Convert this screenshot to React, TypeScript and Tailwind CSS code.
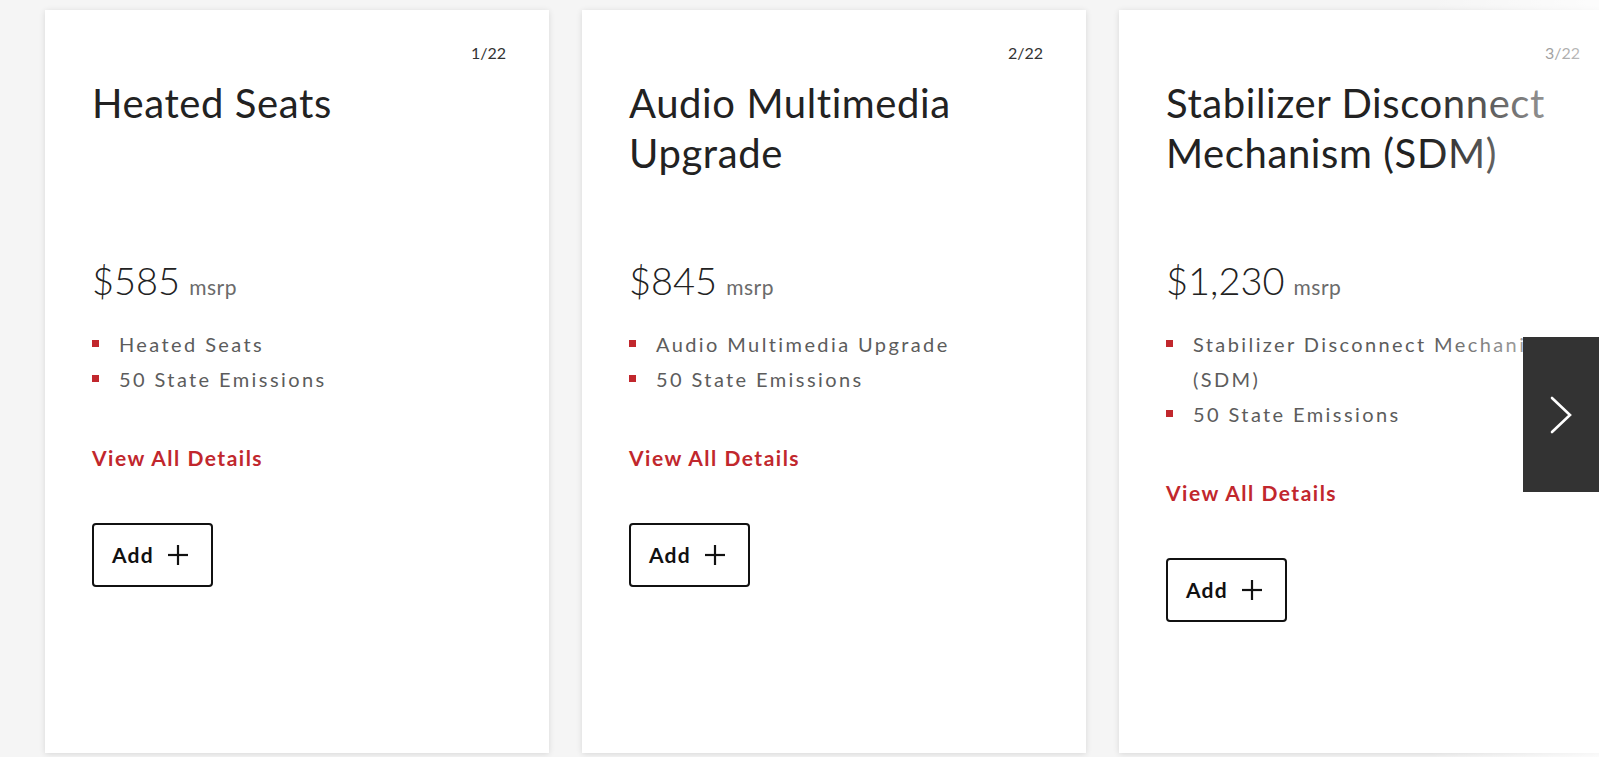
import React from "react";

type Card = {
  idx: string;
  title: string;
  price: string;
  bullets: string[];
};

const cards: Card[] = [
  { idx: "1/22", title: "Heated Seats", price: "$585", bullets: ["Heated Seats", "50 State Emissions"] },
  { idx: "2/22", title: "Audio Multimedia Upgrade", price: "$845", bullets: ["Audio Multimedia Upgrade", "50 State Emissions"] },
  {
    idx: "3/22",
    title: "Stabilizer Disconnect Mechanism (SDM)",
    price: "$1,230",
    bullets: ["Stabilizer Disconnect Mechanism (SDM)", "50 State Emissions"],
  },
];

function PlusIcon() {
  return (
    <svg width="22" height="22" viewBox="0 0 22 22" fill="none" stroke="#111" strokeWidth="2.2">
      <line x1="11" y1="1" x2="11" y2="21" />
      <line x1="1" y1="11" x2="21" y2="11" />
    </svg>
  );
}

function CardView({ c }: { c: Card }) {
  return (
    <div className="w-[504px] h-[743px] shrink-0 bg-white shadow-[0_1px_6px_rgba(0,0,0,0.12)] pl-[47px] pr-[43px] pt-[33px]">
      <div className="text-right text-[16px] leading-[20px] text-[#333]">{c.idx}</div>
      <div className="mt-[15px] h-[100px] text-[40px] leading-[50px] text-[#222] tracking-[0.6px]">{c.title}</div>
      <div className="mt-[79px] flex items-baseline h-[46px]">
        <span className="text-[38px] leading-[46px] font-light text-[#222]">{c.price}</span>
        <span className="ml-[9px] text-[21px] tracking-[0.5px] text-[#6b6b6b]">msrp</span>
      </div>
      <ul className="mt-[24px]">
        {c.bullets.map((b) => (
          <li key={b} className="flex text-[20px] leading-[35px] tracking-[2.4px] text-[#5c5c5c]">
            <span className="w-[27px] shrink-0 flex pt-[13px]">
              <span className="block w-[7px] h-[7px] bg-[#c1272d]" />
            </span>
            <span>{b}</span>
          </li>
        ))}
      </ul>
      <div className="mt-[47px] text-[21px] leading-[28px] font-bold text-[#c1272d] tracking-[1.5px]">View All Details</div>
      <button className="mt-[51px] w-[121px] h-[64px] border-2 border-[#111] rounded-[4px] flex items-center pl-[18px] gap-[13px]">
        <span className="text-[21px] font-bold text-[#111] tracking-[1.2px]">Add</span>
        <PlusIcon />
      </button>
    </div>
  );
}

export default function App() {
  return (
    <div
      className="relative w-[1599px] h-[757px] overflow-hidden bg-[#f5f5f5]"
      style={{ fontFamily: "Lato, 'Open Sans', sans-serif" }}
    >
      <div className="flex gap-[33px] pl-[45px] pt-[10px]">
        {cards.map((c) => (
          <CardView key={c.idx} c={c} />
        ))}
      </div>
      <div className="pointer-events-none absolute top-0 right-0 h-full w-[170px] bg-linear-to-r from-white/0 to-white/75" />
      <button className="absolute right-0 top-[337px] w-[76px] h-[155px] bg-[#333] flex items-center justify-center">
        <svg width="22" height="38" viewBox="0 0 22 38" fill="none" stroke="#fff" strokeWidth="2.6" strokeLinecap="round">
          <polyline points="2,2 20,19 2,36" />
        </svg>
      </button>
    </div>
  );
}
